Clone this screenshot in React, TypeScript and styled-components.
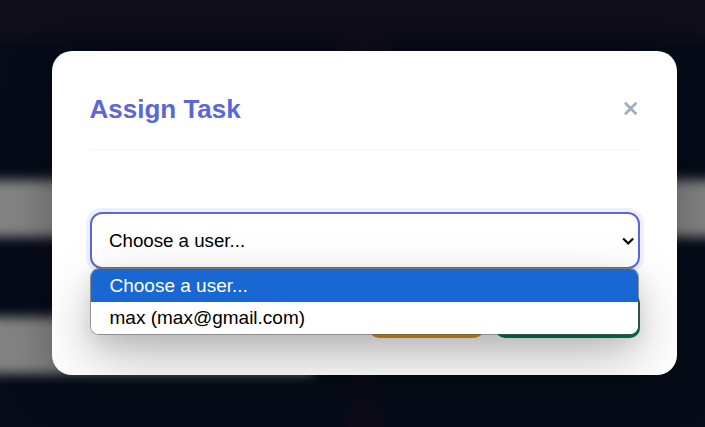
import React from "react";
import styled, { createGlobalStyle } from "styled-components";

const GlobalStyle = createGlobalStyle`
  *, *::before, *::after { box-sizing: border-box; }
  body { margin: 0; background: #050b18; font-family: "Liberation Sans", Arial, sans-serif; }
`;

const Screen = styled.div`
  position: relative;
  display: flex;
  width: 705px;
  height: 427px;
  padding: 51px 28px 52px 52px;
  overflow: hidden;
  background: #050b18;
`;

const Backdrop = styled.div`
  position: absolute;
  inset: 0;
  display: flex;
  flex-direction: column;
  background:
    radial-gradient(ellipse 26px 70px at 364px 427px, #110a19, transparent),
    radial-gradient(ellipse 30px 30px at 364px 42px, #110b1a, transparent),
    linear-gradient(#110e1c 0, #0f0d1a 30px, #050b18 49px);
`;

const BlurredRow = styled.div<{ $gap: number; $width: number }>`
  flex: none;
  width: ${(p) => p.$width}px;
  height: 57px;
  margin: ${(p) => p.$gap}px 0 0 -40px;
  background: #838383;
  filter: blur(6px);
`;

const Dialog = styled.section`
  position: relative;
  display: flex;
  flex-direction: column;
  width: 625px;
  height: 324px;
  padding: 38px 37px 38px 38px;
  background: #fff;
  border-radius: 20px;
  box-shadow: 0 10px 45px rgba(0, 0, 0, 0.3);
`;

const Header = styled.header`
  display: flex;
  flex: none;
  align-items: center;
  justify-content: space-between;
  height: 62px;
  padding-bottom: 20px;
  border-bottom: 2px solid #f7fafc;
`;

const Title = styled.h2`
  margin: 0 0 0 -0.5px;
  color: #5a67d8;
  font-size: 26px;
  line-height: 38px;
`;

const CloseButton = styled.button`
  display: flex;
  padding: 0;
  border: 0;
  background: none;
  color: #a0aec0;
`;

const Field = styled.div`
  position: relative;
  flex: none;
  margin-top: 61px;
`;

const SelectBox = styled.button`
  display: flex;
  align-items: center;
  justify-content: space-between;
  width: 100%;
  height: 57px;
  padding: 0 3px 0 17px;
  border: 2px solid #5a67d8;
  border-radius: 12px;
  background: #fff;
  color: #000;
  font: 18.7px "Liberation Sans", Arial, sans-serif;
  box-shadow: 0 0 0 4px rgba(90, 103, 216, 0.1);
`;

const Menu = styled.ul`
  position: absolute;
  z-index: 2;
  top: 56px;
  left: 0;
  width: 549px;
  margin: 0;
  padding: 0;
  list-style: none;
  overflow: hidden;
  border: 1px solid rgba(70, 70, 70, 0.6);
  border-top-color: #777;
  border-radius: 9px;
  background: #fff;
  background-clip: padding-box;
`;

const MenuShade = styled.div`
  position: absolute;
  inset: 0;
  overflow: hidden;
  border-radius: 20px;
  pointer-events: none;
  z-index: 1;

  &::before {
    content: "";
    position: absolute;
    top: 217px;
    left: 38px;
    width: 549px;
    height: 67px;
    border-radius: 9px;
    box-shadow: 0 8px 20px rgba(0, 0, 0, 0.1), 0 24px 56px rgba(0, 0, 0, 0.25);
  }
`;

const Option = styled.li<{ $active?: boolean }>`
  height: ${(p) => (p.$active ? 33 : 32)}px;
  padding: ${(p) => (p.$active ? 1 : 0)}px 0 0 18.5px;
  background: ${(p) => (p.$active ? "#1967d2" : "#fff")};
  color: ${(p) => (p.$active ? "#fff" : "#000")};
  font-size: 19px;
  line-height: 32px;
`;

const Footer = styled.footer`
  display: flex;
  flex: none;
  justify-content: flex-end;
  gap: 11px;
  margin-top: 24px;
`;

const Action = styled.button<{ $width: number; $color: string }>`
  width: ${(p) => p.$width}px;
  height: 45px;
  border: 0;
  border-radius: 10px;
  background: ${(p) => p.$color};
`;

export default function App() {
  return (
    <>
      <GlobalStyle />
      <Screen>
        <Backdrop>
          <BlurredRow $gap={180} $width={785} />
          <BlurredRow $gap={80} $width={353} />
        </Backdrop>
        <Dialog role="dialog">
          <Header>
            <Title>Assign Task</Title>
            <CloseButton>
              <svg width="19" height="20" viewBox="0 0 19 20" fill="none" stroke="currentColor" strokeWidth="2.8">
                <path d="M4 3.8 15.4 15.2M15.4 3.8 4 15.2" />
              </svg>
            </CloseButton>
          </Header>
          <Field>
            <SelectBox>
              <span>Choose a user...</span>
              <svg width="14" height="14" viewBox="0 0 14 14" fill="none" stroke="currentColor" strokeWidth="2.2">
                <path d="m2.2 4.5 5 5 5-5" />
              </svg>
            </SelectBox>
            <Menu>
              <Option $active>Choose a user...</Option>
              <Option>max (max@gmail.com)</Option>
            </Menu>
          </Field>
          <Footer>
            <Action $width={115} $color="#e2940f" />
            <Action $width={145} $color="#047857" />
          </Footer>
          <MenuShade />
        </Dialog>
      </Screen>
    </>
  );
}
